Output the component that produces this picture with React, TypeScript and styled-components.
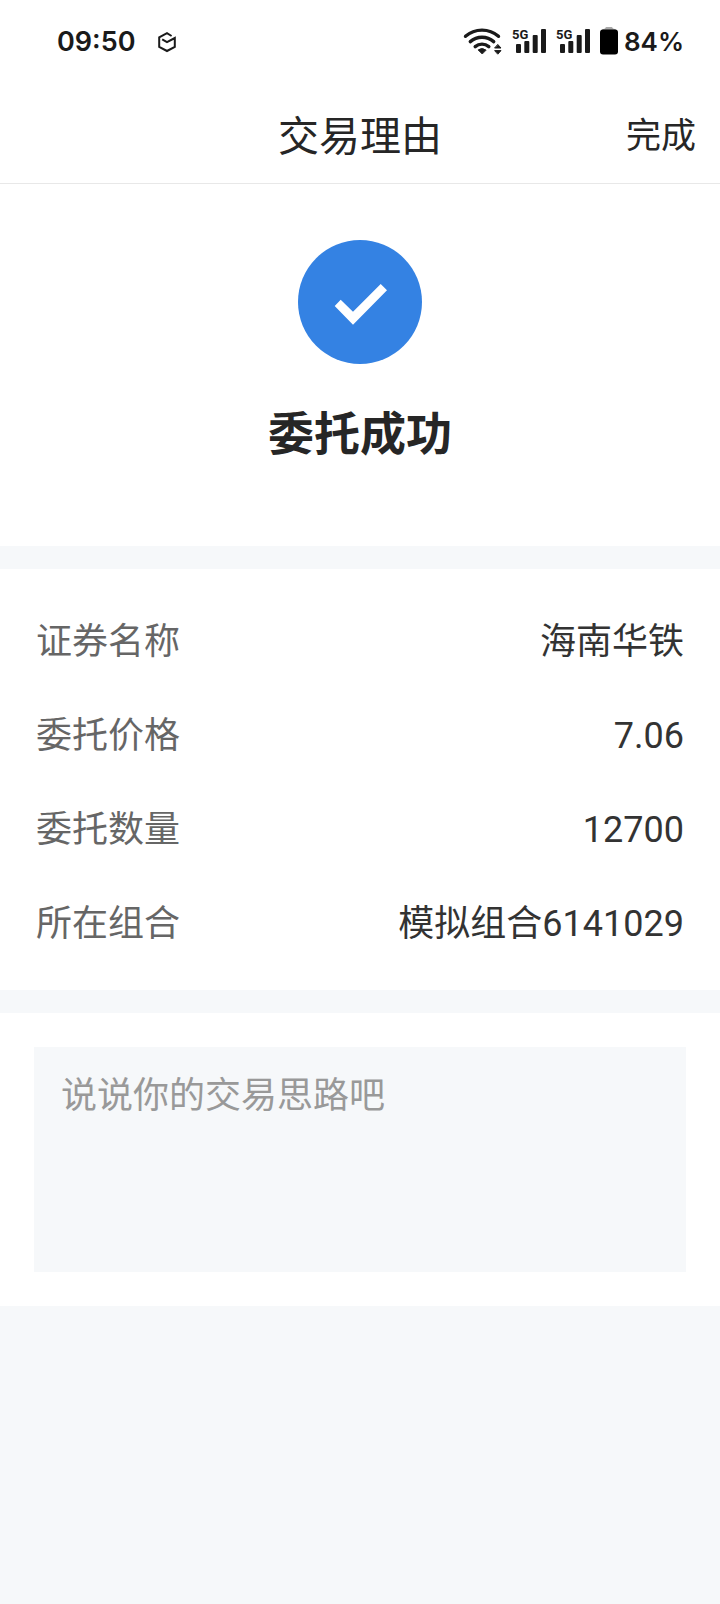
import React, { useState } from "react";
import styled, { createGlobalStyle } from "styled-components";

const GlobalStyle = createGlobalStyle`
  *, *::before, *::after { box-sizing: border-box; }
  body {
    margin: 0;
    background: #f6f8fa;
    color: #262626;
    font-family: Roboto, "Noto Sans CJK SC", sans-serif;
  }
`;

const Page = styled.div`
  display: flex;
  flex-direction: column;
  min-height: 100vh;
`;

const StatusBar = styled.div`
  display: flex;
  align-items: center;
  justify-content: space-between;
  height: 84px;
  padding: 0 36px 0 57px;
  background: #ffffff;
  color: #1a1a1a;
`;

const StatusGroup = styled.div<{ $gap: number }>`
  display: flex;
  align-items: center;
  gap: ${(p) => p.$gap}px;
`;

const Clock = styled.time`
  font: 600 27px/40px Inter, sans-serif;
`;

const BatteryLevel = styled.span`
  font: 600 26px/40px Inter, sans-serif;
`;

const Icon = styled.svg`
  display: block;
  flex: none;
`;

const NavBar = styled.header`
  display: grid;
  grid-template-columns: 1fr auto 1fr;
  align-items: center;
  height: 100px;
  padding: 6px 24px 0;
  background: #ffffff;
  border-bottom: 1px solid #e8e8e8;
`;

const NavTitle = styled.h1`
  grid-column: 2;
  margin: 0;
  font-size: 41px;
  line-height: 60px;
  font-weight: 400;
`;

const DoneButton = styled.button`
  justify-self: end;
  padding: 0;
  border: 0;
  background: none;
  color: inherit;
  font-family: inherit;
  font-size: 35px;
  line-height: 60px;
  cursor: pointer;
`;

const Main = styled.main`
  display: flex;
  flex-direction: column;
  gap: 23px;
`;

const Result = styled.section`
  display: flex;
  flex-direction: column;
  align-items: center;
  gap: 36px;
  padding: 56px 24px 78px;
  background: #ffffff;
`;

const ResultTitle = styled.h2`
  margin: 0;
  font-size: 46px;
  line-height: 68px;
  font-weight: 700;
`;

const Details = styled.dl`
  margin: 0;
  padding: 26px 36px 19px;
  background: #ffffff;
`;

const DetailRow = styled.div`
  display: flex;
  align-items: center;
  justify-content: space-between;
  height: 94px;
  font-size: 36px;
  line-height: 54px;
`;

const DetailLabel = styled.dt`
  color: #666666;
`;

const DetailValue = styled.dd`
  margin: 0;
  color: #333333;
`;

const NoteCard = styled.section`
  padding: 34px;
  background: #ffffff;
`;

const NoteInput = styled.textarea`
  display: block;
  width: 100%;
  height: 225px;
  padding: 22px 27px;
  border: 0;
  border-radius: 0;
  outline: none;
  resize: none;
  background: #f6f8fa;
  color: #333333;
  font-family: inherit;
  font-size: 36px;
  line-height: 54px;

  &::placeholder {
    color: #999999;
    opacity: 1;
  }
`;

const BoxIcon = () => (
  <Icon width="20" height="22" viewBox="0 0 20 22" fill="none" stroke="currentColor" strokeWidth="2" aria-hidden="true">
    <path d="M14.6 5 10 2.2 2.2 6.4v9.4L10 20l7.8-4.2V7L10 11.2 5.2 8.4" />
  </Icon>
);

const WifiIcon = () => (
  <Icon width="40" height="30" viewBox="0 0 40 30" fill="none" stroke="currentColor" strokeWidth="3.4" strokeLinecap="round" aria-hidden="true">
    <path d="M2.500 9.300a25 25 0 0 1 33 0" />
    <path d="M7.300 14.600a18 18 0 0 1 23.400 0" />
    <path d="M12.200 19.600a10.600 10.600 0 0 1 13.600 0" />
    <path d="M19 26.700l-3.800-3.800q3.800-2.800 7.600 0z" fill="currentColor" strokeWidth="1" strokeLinejoin="round" />
    <path d="M35 17.700l3 3.300h-6zM35 26.900l3-3.300h-6z" fill="currentColor" strokeWidth="1" strokeLinejoin="round" />
  </Icon>
);

const SignalIcon = () => (
  <Icon width="35" height="30" viewBox="0 0 35 30" fill="currentColor" aria-label="5G">
    <text x="0" y="12" fontFamily="Roboto, sans-serif" fontSize="13" fontWeight="700">5G</text>
    <rect x="4" y="17" width="5" height="9" rx="1" />
    <rect x="12.3" y="14" width="5" height="12" rx="1" />
    <rect x="20.7" y="8" width="5" height="18" rx="1" />
    <rect x="29" y="2" width="5" height="24" rx="1" />
  </Icon>
);

const BatteryIcon = () => (
  <Icon width="18" height="30" viewBox="0 0 18 30" aria-hidden="true">
    <path d="M1 3.500Q2 1.600 5 1.400Q6-.6 9-.6t4 2q3 .2 4 2.100z" fill="#a8a8a8" />
    <rect y="2.500" width="18" height="25" rx="3" fill="#000000" />
  </Icon>
);

const SuccessIcon = () => (
  <Icon width="124" height="124" viewBox="0 0 124 124" aria-hidden="true">
    <circle cx="62" cy="62" r="62" fill="#3482e3" />
    <path d="M36.700 66 55 84.700 89 50.300 82.700 44 55 71.700 42.700 59.700z" fill="#ffffff" />
  </Icon>
);

const details = [
  { label: "证券名称", value: "海南华铁" },
  { label: "委托价格", value: "7.06" },
  { label: "委托数量", value: "12700" },
  { label: "所在组合", value: "模拟组合6141029" },
];

export default function App() {
  const [note, setNote] = useState("");

  return (
    <Page lang="zh-CN">
      <GlobalStyle />
      <StatusBar>
        <StatusGroup $gap={22}>
          <Clock>09:50</Clock>
          <BoxIcon />
        </StatusGroup>
        <StatusGroup $gap={9}>
          <WifiIcon />
          <SignalIcon />
          <SignalIcon />
          <StatusGroup $gap={6}>
            <BatteryIcon />
            <BatteryLevel>84%</BatteryLevel>
          </StatusGroup>
        </StatusGroup>
      </StatusBar>
      <NavBar>
        <NavTitle>交易理由</NavTitle>
        <DoneButton type="button">完成</DoneButton>
      </NavBar>
      <Main>
        <Result>
          <SuccessIcon />
          <ResultTitle>委托成功</ResultTitle>
        </Result>
        <Details>
          {details.map((item) => (
            <DetailRow key={item.label}>
              <DetailLabel>{item.label}</DetailLabel>
              <DetailValue>{item.value}</DetailValue>
            </DetailRow>
          ))}
        </Details>
        <NoteCard>
          <NoteInput
            aria-label="交易思路"
            placeholder="说说你的交易思路吧"
            value={note}
            onChange={(e) => setNote(e.target.value)}
          />
        </NoteCard>
      </Main>
    </Page>
  );
}
